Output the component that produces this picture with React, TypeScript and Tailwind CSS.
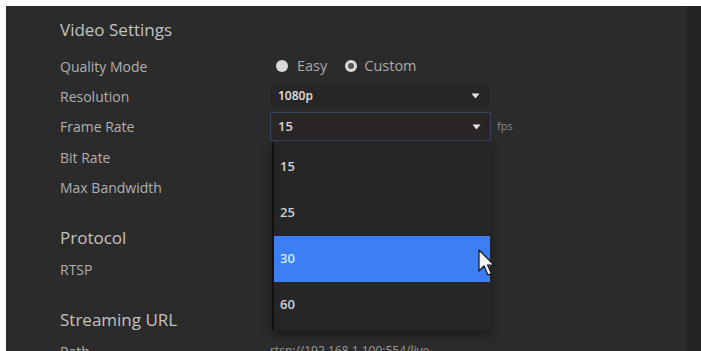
import React from "react";

function Caret() {
  return (
    <svg width="9" height="6" viewBox="0 0 9 6" className="shrink-0">
      <path d="M0.5 0.5 L8.5 0.5 L4.5 5.5 Z" fill="#e6e6e6" />
    </svg>
  );
}

function Row({ label, children, h = "h-[30px]" }: { label: string; children?: React.ReactNode; h?: string }) {
  return (
    <div className={`flex items-center ${h}`}>
      <div className="w-[210px] text-[14px] text-[#b0b0b0]">{label}</div>
      <div className="flex items-center">{children}</div>
    </div>
  );
}

const options = ["15", "25", "30", "60"];

export default function App() {
  return (
    <div
      className="w-[701px] h-[351px] bg-white pt-[6px] pl-[6px] flex overflow-hidden"
      style={{ fontFamily: '"Open Sans", "Noto Sans", sans-serif' }}
    >
      <div className="relative flex-1 flex bg-[#2b2b2b]">
        <div className="flex-1 pl-[54px] pt-[13px]">
          {/* Video settings */}
          <div className="h-[22px] text-[17px] leading-[22px] text-[#c2c2c2]">Video Settings</div>
          <div className="mt-[10px]">
            <Row label="Quality Mode">
              <span className="ml-[6px] w-[12px] h-[12px] rounded-full bg-[#d9d9d9]" />
              <span className="ml-[9px] text-[14.5px] text-[#a8a8a8]">Easy</span>
              <span className="ml-[18px] w-[12px] h-[12px] rounded-full bg-[#d9d9d9] flex items-center justify-center">
                <span className="w-[6px] h-[6px] rounded-full bg-[#555]" />
              </span>
              <span className="ml-[7px] text-[14.5px] text-[#a8a8a8]">Custom</span>
            </Row>
            <Row label="Resolution">
              <div className="w-[220px] h-[22px] bg-[#262626] flex items-center justify-between pl-[8px] pr-[10px]">
                <span className="text-[12px] font-semibold text-[#e0e0e0]">1080p</span>
                <Caret />
              </div>
            </Row>
            <Row label="Frame Rate" h="h-[31px]">
              <div className="w-[221px] h-[29px] bg-[#2a2626] border border-[#38445c] flex items-center justify-between pl-[7px] pr-[9px]">
                <span className="text-[13px] font-semibold text-[#d6d6d6]">15</span>
                <Caret />
              </div>
              <span className="ml-[6px] text-[11px] text-[#8c8c8c]">fps</span>
            </Row>
            <Row label="Bit Rate" />
            <Row label="Max Bandwidth" />
          </div>

          {/* Protocol */}
          <div className="mt-[25px] h-[22px] text-[17px] leading-[22px] text-[#c2c2c2]">Protocol</div>
          <div className="mt-[5px]">
            <Row label="RTSP" />
          </div>

          {/* Streaming URL */}
          <div className="mt-[24px] h-[24px] text-[17px] leading-[24px] text-[#c2c2c2]">Streaming URL</div>
          <div className="mt-[4px]">
            <Row label="Path">
              <span className="text-[12px] text-[#9a9a9a]">rtsp://192.168.1.100:554/live</span>
            </Row>
          </div>
        </div>
        <div className="w-[14px] bg-[#232323]" />

        {/* Open dropdown list */}
        <div className="absolute left-[266px] top-[136px] w-[218px] h-[188px] bg-[#262626] border-l-2 border-[#101010] pt-[2px] shadow-[0_4px_10px_rgba(0,0,0,0.4)]">
          {options.map((o) => (
            <div
              key={o}
              className={
                o === "30"
                  ? "h-[46px] flex items-center pl-[6px] bg-[#3c7ef3] text-[13px] font-semibold text-[#dde8ff]"
                  : "h-[46px] flex items-center pl-[6px] text-[13px] font-semibold text-[#d2d2d2]"
              }
            >
              {o}
            </div>
          ))}
        </div>

        {/* Mouse cursor */}
        <svg
          className="absolute left-[472px] top-[243px]"
          width="20"
          height="28"
          viewBox="0 0 20 28"
        >
          <path
            d="M1 1 L1 22 L6 17 L10 26 L13.5 24.5 L9.5 16 L16 16 Z"
            fill="#f4f4f4"
            stroke="#111"
            strokeWidth="1.2"
            strokeLinejoin="round"
          />
        </svg>
      </div>
    </div>
  );
}
